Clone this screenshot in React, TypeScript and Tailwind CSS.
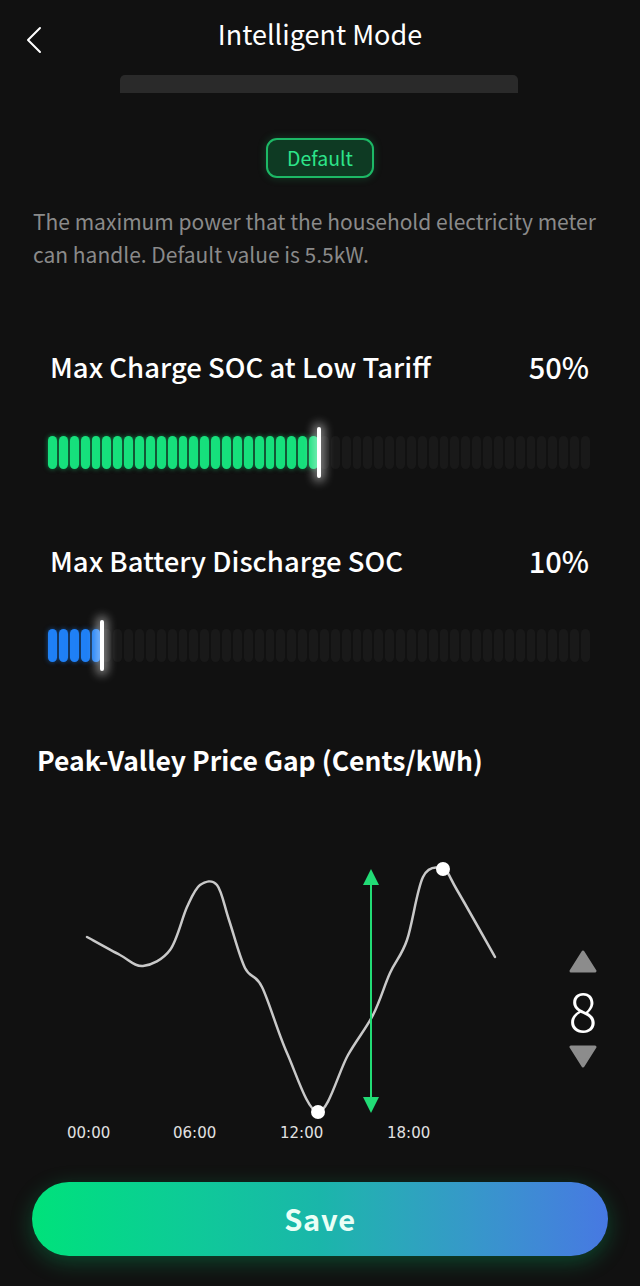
import { ChevronLeft } from 'lucide-react';

const SEGMENTS = 50;

// chart points, svg coords (page y - 840)
const CURVE: [number, number][] = [
  [87, 97], [120, 115], [143, 126], [170, 110], [187, 67], [200, 45], [217, 45],
  [229, 80], [245, 128], [262, 147], [287, 213], [318, 272], [348, 215], [373, 175],
  [390, 133], [407, 100], [423, 37], [443, 29], [457, 50], [495, 117],
];

function smoothPath(pts: [number, number][]) {
  let d = `M${pts[0][0]},${pts[0][1]}`;
  for (let i = 0; i < pts.length - 1; i++) {
    const p0 = pts[i - 1] ?? pts[i];
    const p1 = pts[i];
    const p2 = pts[i + 1];
    const p3 = pts[i + 2] ?? p2;
    const c1x = p1[0] + (p2[0] - p0[0]) / 6;
    const c1y = p1[1] + (p2[1] - p0[1]) / 6;
    const c2x = p2[0] - (p3[0] - p1[0]) / 6;
    const c2y = p2[1] - (p3[1] - p1[1]) / 6;
    d += ` C${c1x},${c1y} ${c2x},${c2y} ${p2[0]},${p2[1]}`;
  }
  return d;
}

function SegmentBar({ percent, color }: { percent: number; color: 'green' | 'blue' }) {
  const lit = Math.round((percent / 100) * SEGMENTS);
  return (
    <div className="relative h-[51px] flex items-center gap-[2px] ml-[48px] mr-[50px]">
      {Array.from({ length: SEGMENTS }).map((_, i) => (
        <div
          key={i}
          className={
            i < lit
              ? color === 'green'
                ? 'flex-1 h-[33px] rounded-full bg-[#16e07c] shadow-[0_0_5px_rgba(22,224,124,0.55)]'
                : 'flex-1 h-[33px] rounded-full bg-[#1f80f6] shadow-[0_0_5px_rgba(31,128,246,0.55)]'
              : 'flex-1 h-[33px] rounded-full bg-[#191919]'
          }
        />
      ))}
      {/* thumb */}
      <div
        className="absolute top-0 h-[51px] w-[4px] -ml-[2px] rounded-full bg-white shadow-[0_0_10px_4px_rgba(255,255,255,0.45)]"
        style={{ left: `${percent}%` }}
      />
    </div>
  );
}

function Heading({ label, value }: { label: string; value: string }) {
  return (
    <div className="flex items-center justify-between pl-[50px] pr-[51px] h-[36px] text-white font-medium">
      <span className="text-[27.5px]">{label}</span>
      <span className="text-[29px]">{value}</span>
    </div>
  );
}

export default function App() {
  return (
    <div
      className="min-h-[1286px] w-full bg-[#111111] text-white flex flex-col"
      style={{ fontFamily: '"Noto Sans CJK SC", "Noto Sans", sans-serif' }}
    >
      {/* ── Header ── */}
      <header className="h-[70px] grid grid-cols-[70px_1fr_70px] items-center">
        <ChevronLeft className="w-[48px] h-[48px] ml-[10px] mt-[10px] text-white" strokeWidth={1} />
        <h1 className="text-center text-[27px] leading-none -mt-[4px]">Intelligent Mode</h1>
        <div />
      </header>

      <div className="mt-[5px] ml-[120px] w-[398px] h-[18px] rounded-t-[5px] bg-[#2a2a2a]" />

      {/* Default pill */}
      <div className="mt-[45px] mx-auto w-[108px] h-[40px] rounded-[11px] border-2 border-[#1db866] bg-[#0e3a23] shadow-[0_0_8px_rgba(30,200,110,0.25)] flex items-center justify-center text-[19.5px] text-[#2de48a]">
        Default
      </div>

      <p className="mt-[27px] px-[33px] text-[21px] leading-[33px] text-[#8a8a8a]">
        The maximum power that the household electricity meter can handle. Default value is 5.5kW.
      </p>

      {/* ── Charge SOC ── */}
      <div className="mt-[78px]">
        <Heading label="Max Charge SOC at Low Tariff" value="50%" />
      </div>
      <div className="mt-[42px]">
        <SegmentBar percent={50} color="green" />
      </div>

      {/* ── Discharge SOC ── */}
      <div className="mt-[65px]">
        <Heading label="Max Battery Discharge SOC" value="10%" />
      </div>
      <div className="mt-[41px]">
        <SegmentBar percent={10} color="blue" />
      </div>

      {/* ── Price gap ── */}
      <h2 className="mt-[71px] pl-[37px] h-[36px] flex items-center text-[26.5px] font-semibold">
        Peak-Valley Price Gap (Cents/kWh)
      </h2>

      <div className="mt-[62px] flex items-start">
        <svg width="540" height="310" viewBox="0 0 540 310" className="shrink-0">
          <path d={smoothPath(CURVE)} fill="none" stroke="#c9c9c9" strokeWidth="2.5" strokeLinecap="round" />
          <line x1="371" y1="40" x2="371" y2="262" stroke="#22dc76" strokeWidth="2" />
          <polygon points="371,29 363,45 379,45" fill="#22dc76" />
          <polygon points="371,273 363,257 379,257" fill="#22dc76" />
          <circle cx="318" cy="272" r="7" fill="white" />
          <circle cx="443" cy="29" r="7" fill="white" />
          <g fill="#e2e2e2" fontSize="15" fontFamily="'DejaVu Sans', sans-serif">
            <text x="67" y="298">00:00</text>
            <text x="173" y="298">06:00</text>
            <text x="280" y="298">12:00</text>
            <text x="387" y="298">18:00</text>
          </g>
        </svg>

        {/* stepper */}
        <div className="mt-[110px] ml-[29px] w-[28px] flex flex-col items-center">
          <svg width="28" height="23" viewBox="0 0 28 23">
            <path d="M14 2 L26 21 L2 21 Z" fill="#8c8c8c" stroke="#8c8c8c" strokeWidth="3" strokeLinejoin="round" />
          </svg>
          <span className="mt-[10px] text-[53px] leading-[52px] font-light text-white">8</span>
          <svg width="28" height="23" viewBox="0 0 28 23" className="mt-[10px]">
            <path d="M2 2 L26 2 L14 21 Z" fill="#8c8c8c" stroke="#8c8c8c" strokeWidth="3" strokeLinejoin="round" />
          </svg>
        </div>
      </div>

      {/* ── Save ── */}
      <button className="mt-[32px] mx-[32px] h-[74px] rounded-full bg-gradient-to-r from-[#00e27a] via-[#1ab6aa] to-[#4778e2] shadow-[0_6px_22px_rgba(0,200,110,0.3)] text-[29px] font-semibold text-[#eafff6] tracking-wide">
        Save
      </button>
    </div>
  );
}
